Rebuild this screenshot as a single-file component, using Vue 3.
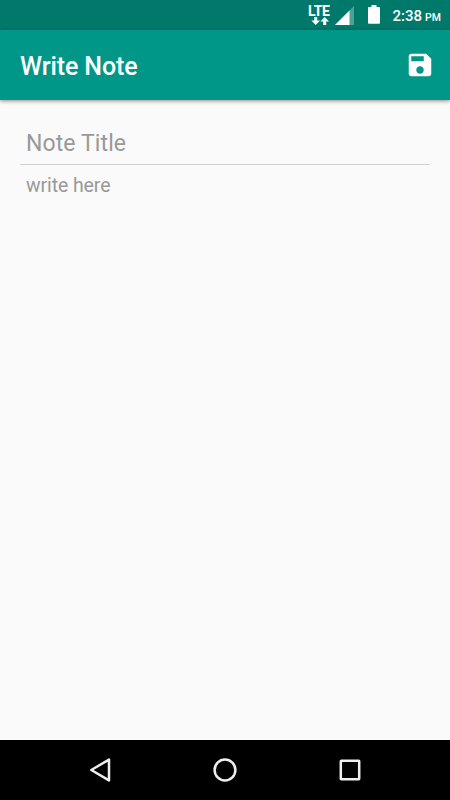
<template>
    <main class="screen">
        <header class="status-bar">
            <div class="network">
                <span class="network-type">LTE</span>
                <svg class="arrows" width="18" height="8" viewBox="0 0 18 8">
                    <path d="M3.2 0h3v3.4H9L4.7 8 .4 3.4h2.8z" />
                    <path d="M12.2 8h3V4.6H18L13.7 0 9.4 4.6h2.8z" />
                </svg>
            </div>
            <svg class="signal" width="20" height="19" viewBox="0 0 20 19">
                <path class="faded" d="M19 0v19H0z" />
                <path d="M14.5 4.5V19H0z" />
            </svg>
            <svg class="battery" width="12" height="19" viewBox="0 0 12 19">
                <path d="M3.5 0h5v2H11q1 0 1 1v14.8q0 1-1 1H1q-1 0-1-1V3q0-1 1-1h2.5z" />
            </svg>
            <span class="time">2:38<small>PM</small></span>
        </header>

        <div class="toolbar">
            <h1>Write Note</h1>
            <button class="save" aria-label="Save" @click="saveNote">
                <svg width="30" height="30" viewBox="0 0 24 24">
                    <path d="M17 3H5c-1.11 0-2 .9-2 2v14c0 1.1.89 2 2 2h14c1.1 0 2-.9 2-2V7l-4-4zm-5 16c-1.66 0-3-1.34-3-3s1.34-3 3-3 3 1.34 3 3-1.34 3-3 3zm3-10H5V5h10v4z" />
                </svg>
            </button>
        </div>

        <form class="editor" @submit.prevent="saveNote">
            <input class="note-title" type="text" placeholder="Note Title" v-model="note.title" />
            <textarea class="note-body" placeholder="write here" v-model="note.body"></textarea>
        </form>

        <nav class="nav-bar">
            <button aria-label="Back">
                <svg width="26" height="26" viewBox="0 0 26 26">
                    <path d="M22 2.6v20.8L4.3 13z" />
                </svg>
            </button>
            <button aria-label="Home">
                <svg width="26" height="26" viewBox="0 0 26 26">
                    <circle cx="13" cy="13" r="10.4" />
                </svg>
            </button>
            <button aria-label="Recent apps">
                <svg width="26" height="26" viewBox="0 0 26 26">
                    <rect x="3.8" y="3.8" width="18.4" height="18.4" rx="0.5" />
                </svg>
            </button>
        </nav>
    </main>
</template>

<script setup>
import { reactive, ref } from 'vue'

const note = reactive({
    title: '',
    body: ''
})

const notes = ref([])

function saveNote() {
    if (!note.title && !note.body) return
    notes.value.push({ ...note })
    note.title = ''
    note.body = ''
}
</script>

<style>
body {
    margin: 0;
}
</style>

<style scoped>
.screen {
    display: flex;
    flex-direction: column;
    width: 100%;
    height: 100vh;
    background: #fafafa;
    font-family: Roboto, sans-serif;
    overflow: hidden;
}

button {
    display: flex;
    padding: 0;
    border: none;
    background: none;
    cursor: pointer;
}

.status-bar {
    display: flex;
    justify-content: flex-end;
    flex-shrink: 0;
    box-sizing: border-box;
    height: 30px;
    padding-right: 9px;
    background: #00796b;
    color: #fff;
}

.status-bar svg {
    display: block;
    flex-shrink: 0;
    fill: #fff;
}

.network {
    width: 23px;
    padding-top: 6px;
    margin-right: 4px;
}

.network-type {
    display: block;
    height: 11px;
    font-size: 14px;
    line-height: 11px;
    font-weight: 700;
    letter-spacing: -0.3px;
}

.arrows {
    margin-left: 3px;
}

.signal {
    margin: 6px 13px 0 0;
}

.signal .faded {
    opacity: 0.3;
}

.battery {
    margin: 5px 0 0;
}

.time {
    width: 48.5px;
    margin-left: 12.5px;
    font-size: 15px;
    font-weight: 500;
    line-height: 32px;
    white-space: nowrap;
}

.time small {
    margin-left: 3px;
    font-size: 10.5px;
}

.toolbar {
    display: flex;
    align-items: center;
    justify-content: space-between;
    flex-shrink: 0;
    box-sizing: border-box;
    height: 70px;
    padding: 0 15px 0 20px;
    background: #009688;
    box-shadow: 0 1px 4px rgba(0, 0, 0, 0.45);
}

.toolbar h1 {
    margin: 3px 0 0;
    color: #fff;
    font-size: 25px;
    font-weight: 500;
    line-height: 30px;
    letter-spacing: -0.1px;
}

.save svg {
    fill: #fff;
}

.editor {
    display: flex;
    flex: 1;
    flex-direction: column;
    padding: 24px 20px 0;
}

.note-title,
.note-body {
    box-sizing: border-box;
    width: 100%;
    padding: 0 6px;
    border: none;
    border-radius: 0;
    outline: none;
    background: transparent;
    color: #212121;
    font-family: inherit;
}

.note-title {
    height: 41px;
    padding-bottom: 1px;
    border-bottom: 1px solid #cfcfcf;
    font-size: 23px;
    letter-spacing: 0.1px;
}

.note-body {
    flex: 1;
    padding-top: 8px;
    font-size: 19.5px;
    line-height: 25px;
    letter-spacing: -0.1px;
    resize: none;
}

.note-title::placeholder,
.note-body::placeholder {
    color: #999;
    opacity: 1;
}

.nav-bar {
    display: flex;
    align-items: center;
    justify-content: space-between;
    flex-shrink: 0;
    box-sizing: border-box;
    height: 60px;
    padding: 0 87px;
    background: #000;
}

.nav-bar svg {
    fill: none;
    stroke: #eee;
    stroke-width: 2.5;
    stroke-linejoin: round;
}
</style>
